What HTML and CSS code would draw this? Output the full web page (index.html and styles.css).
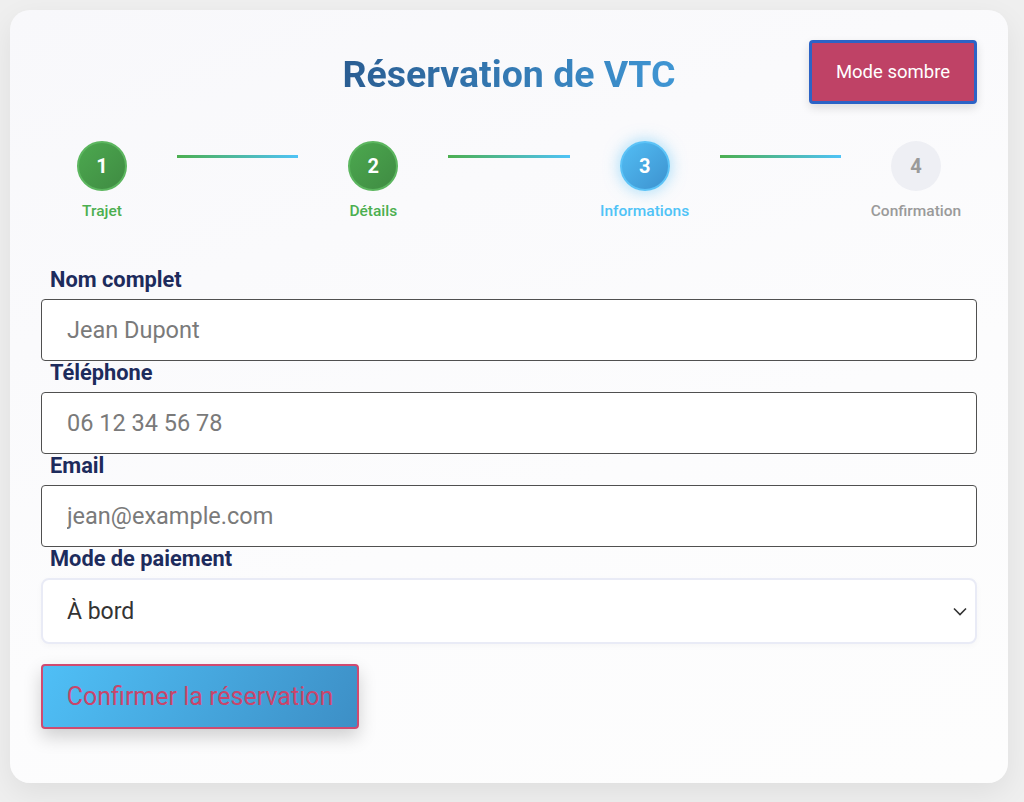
FILE: index.html
```html
<!DOCTYPE html>
<html lang="fr">
<head>
  <meta charset="UTF-8">
  <meta name="viewport" content="width=device-width, initial-scale=1.0">
  <title>Réservation de VTC</title>
  <link rel="stylesheet" href="styles.css">
</head>
<body>
<div class="card">
  <div class="card-header">
    <h1>Réservation de VTC</h1>
    <button class="theme-btn">Mode sombre</button>
  </div>

  <div class="stepper">
    <div class="step done"><div class="circle">1</div><div class="step-label">Trajet</div></div>
    <div class="step-line"></div>
    <div class="step done"><div class="circle">2</div><div class="step-label">Détails</div></div>
    <div class="step-line"></div>
    <div class="step active"><div class="circle">3</div><div class="step-label">Informations</div></div>
    <div class="step-line"></div>
    <div class="step"><div class="circle">4</div><div class="step-label">Confirmation</div></div>
  </div>

  <form class="form">
    <div class="field">
      <label for="name">Nom complet</label>
      <input id="name" type="text" placeholder="Jean Dupont">
    </div>
    <div class="field">
      <label for="phone">Téléphone</label>
      <input id="phone" type="tel" placeholder="06 12 34 56 78">
    </div>
    <div class="field">
      <label for="email">Email</label>
      <input id="email" type="email" placeholder="jean@example.com">
    </div>
    <div class="field">
      <label for="pay">Mode de paiement</label>
      <select id="pay">
        <option>À bord</option>
        <option>Carte bancaire</option>
      </select>
    </div>
    <button type="button" class="submit-btn">Confirmer la réservation</button>
  </form>
</div>
</body>
</html>
```

FILE: styles.css
```css
* { box-sizing: border-box; }
body { margin: 0; background: #efefef; font-family: Roboto, "Liberation Sans", sans-serif; }

.card {
  margin: 10px 16px 20px 10px;
  padding: 30px 31px 54px 31px;
  background: linear-gradient(160deg, #f8f8fb 0%, #fcfcfd 60%, #fdfdfd 100%);
  border-radius: 20px;
  box-shadow: 0 10px 30px rgba(0,0,0,0.07);
}

.card-header { display: grid; grid-template-columns: 1fr auto 1fr; align-items: center; }
.card-header h1 {
  grid-column: 2;
  margin: 4px 0 0;
  font-size: 37.5px;
  font-weight: 700;
  background: linear-gradient(90deg, #2a5d92, #3f96d4);
  -webkit-background-clip: text;
  background-clip: text;
  color: transparent;
}
.theme-btn {
  grid-column: 3;
  justify-self: end;
  width: 168px;
  height: 64px;
  background: #bf4266;
  color: #fff;
  border: 3px solid #2c63c6;
  border-radius: 4px;
  font-family: inherit;
  font-size: 18.5px;
  box-shadow: 0 4px 10px rgba(0,0,0,0.12);
}

.stepper { display: flex; align-items: flex-start; margin-top: 37px; }
.step { width: 122px; display: flex; flex-direction: column; align-items: center; }
.circle {
  width: 50px; height: 50px; border-radius: 50%;
  display: flex; align-items: center; justify-content: center;
  font-size: 20px; font-weight: 700; color: #9a9a9a;
  background: #eeeff4;
}
.step.done .circle { background: linear-gradient(135deg, #4ca84f, #3f8b42); color: #fff; border: 2px solid #5cb65f; }
.step.active .circle { background: linear-gradient(135deg, #52bdf4, #3d92cf); color: #fff; border: 2px solid #5cc3f7; box-shadow: 0 0 16px rgba(79,190,245,0.55); }
.step-label { margin-top: 11px; font-size: 15.5px; font-weight: 500; color: #9a9a9a; }
.step.done .step-label { color: #4caf50; }
.step.active .step-label { color: #4fc3f7; }
.step-line { flex: 1; height: 3px; margin: 14px 14px 0; background: linear-gradient(90deg, #4caf50, #4fc3f7); }

.form { margin-top: 48px; }
.field label { display: block; margin: 0 0 8px 9px; font-size: 21.8px; font-weight: 700; color: #1d2b5c; line-height: 23px; }
.field input {
  display: block; width: 100%; height: 62px;
  padding: 0 25px;
  border: 1.5px solid #505050; border-radius: 4px;
  background: #fff;
  font-family: inherit; font-size: 23.5px; color: #333;
}
.field input::placeholder { color: #7a7a7a; }
.field select {
  display: block; width: 100%; height: 66px;
  padding: 0 24px;
  border: 2px solid #e9ebf6; border-radius: 8px;
  background: #fff url("data:image/svg+xml;utf8,<svg xmlns='http://www.w3.org/2000/svg' width='14' height='9' viewBox='0 0 14 9'><path d='M1 1.5 7 7.5 13 1.5' fill='none' stroke='%23333' stroke-width='1.6'/></svg>") no-repeat right 8px center;
  -webkit-appearance: none; appearance: none;
  font-family: inherit; font-size: 23px; color: #333;
  box-shadow: 0 2px 6px rgba(0,0,0,0.03);
}

.submit-btn {
  margin-top: 20px;
  width: 318px; height: 65px;
  background: linear-gradient(120deg, #4fbff6, #3d8fc6);
  border: 2px solid #d04a70; border-radius: 4px;
  color: #c9456b;
  font-family: inherit; font-size: 25px;
  box-shadow: 0 8px 18px rgba(0,0,0,0.18);
}
```
